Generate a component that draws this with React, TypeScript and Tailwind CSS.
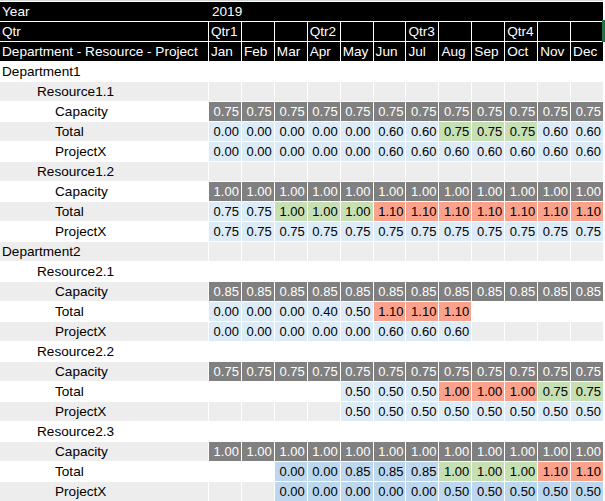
import React from "react";

type Tone = "cap" | "blue" | "blue2" | "green" | "red";
type Cell = [string, Tone] | null;

type Row = {
  label: string;
  indent: 0 | 1 | 2;
  cells?: Cell[];
};

const months = ["Jan", "Feb", "Mar", "Apr", "May", "Jun", "Jul", "Aug", "Sep", "Oct", "Nov", "Dec"];
const qtrs = ["Qtr1", "", "", "Qtr2", "", "", "Qtr3", "", "", "Qtr4", "", ""];

const toneClass: Record<Tone, string> = {
  cap: "bg-[#808080] text-white",
  blue: "bg-[#ddebf7] text-black",
  blue2: "bg-[#bdd7ee] text-black",
  green: "bg-[#c6e0b4] text-black",
  red: "bg-[#fba28d] text-black",
};

// helper: n copies of the same cell
const rep = (n: number, v: string, t: Tone): Cell[] => Array.from({ length: n }, () => [v, t] as Cell);
const empty = (n: number): Cell[] => Array.from({ length: n }, () => null);

const rows: Row[] = [
  { label: "Department1", indent: 0 },
  { label: "Resource1.1", indent: 1 },
  { label: "Capacity", indent: 2, cells: rep(12, "0.75", "cap") },
  {
    label: "Total",
    indent: 2,
    cells: [...rep(5, "0.00", "blue"), ...rep(2, "0.60", "blue"), ...rep(3, "0.75", "green"), ...rep(2, "0.60", "blue")],
  },
  { label: "ProjectX", indent: 2, cells: [...rep(5, "0.00", "blue"), ...rep(7, "0.60", "blue")] },
  { label: "Resource1.2", indent: 1 },
  { label: "Capacity", indent: 2, cells: rep(12, "1.00", "cap") },
  {
    label: "Total",
    indent: 2,
    cells: [...rep(2, "0.75", "blue"), ...rep(3, "1.00", "green"), ...rep(7, "1.10", "red")],
  },
  { label: "ProjectX", indent: 2, cells: rep(12, "0.75", "blue") },
  { label: "Department2", indent: 0 },
  { label: "Resource2.1", indent: 1 },
  { label: "Capacity", indent: 2, cells: rep(12, "0.85", "cap") },
  {
    label: "Total",
    indent: 2,
    cells: [
      ...rep(3, "0.00", "blue"),
      ["0.40", "blue"],
      ["0.50", "blue"],
      ...rep(3, "1.10", "red"),
      ...empty(4),
    ],
  },
  { label: "ProjectX", indent: 2, cells: [...rep(5, "0.00", "blue"), ...rep(3, "0.60", "blue"), ...empty(4)] },
  { label: "Resource2.2", indent: 1 },
  { label: "Capacity", indent: 2, cells: rep(12, "0.75", "cap") },
  {
    label: "Total",
    indent: 2,
    cells: [...empty(4), ...rep(3, "0.50", "blue"), ...rep(3, "1.00", "red"), ...rep(2, "0.75", "green")],
  },
  { label: "ProjectX", indent: 2, cells: [...empty(4), ...rep(8, "0.50", "blue")] },
  { label: "Resource2.3", indent: 1 },
  { label: "Capacity", indent: 2, cells: rep(12, "1.00", "cap") },
  {
    label: "Total",
    indent: 2,
    cells: [
      ...empty(2),
      ...rep(2, "0.00", "blue2"),
      ...rep(3, "0.85", "blue2"),
      ...rep(3, "1.00", "green"),
      ...rep(2, "1.10", "red"),
    ],
  },
  { label: "ProjectX", indent: 2, cells: [...empty(2), ...rep(5, "0.00", "blue2"), ...rep(5, "0.50", "blue2")] },
];

const indentClass = ["pl-[2px]", "pl-[37px]", "pl-[55px]"];

export default function App() {
  return (
    <div
      className="relative w-[605px] h-[501px] bg-white overflow-hidden text-[13.6px] leading-[18px] text-black"
      style={{ fontFamily: '"Liberation Sans", Arial, sans-serif' }}
    >
      <div className="h-px w-[603px] bg-[#d6d6d6]" />
      <div className="grid w-[603px] grid-cols-[208px_repeat(12,minmax(0,1fr))] auto-rows-[19px] gap-px pt-px">
        {/* Year */}
        <div className="col-span-13 grid grid-cols-[208px_repeat(12,minmax(0,1fr))] gap-px bg-black text-white pt-px">
          <div className="pl-[2px]">Year</div>
          <div className="pl-[3px]">2019</div>
        </div>

        {/* Qtr */}
        <div className="bg-black text-white pl-[2px] pt-px">Qtr</div>
        {qtrs.map((q, i) => (
          <div key={"q" + i} className="bg-black text-white pl-[2px] pt-px">
            {q}
          </div>
        ))}

        {/* Header */}
        <div className="bg-black text-white pl-[2px] pt-px whitespace-nowrap">Department - Resource - Project</div>
        {months.map((m) => (
          <div key={m} className="bg-black text-white pl-[2px] pt-px">
            {m}
          </div>
        ))}

        {rows.map((row, r) => {
          const band = r % 2 === 0 ? "bg-white" : "bg-[#ededed]";
          return (
            <React.Fragment key={r}>
              <div className={`${band} ${indentClass[row.indent]} pt-px whitespace-nowrap`}>{row.label}</div>
              {Array.from({ length: 12 }).map((_, c) => {
                const cell = row.cells ? row.cells[c] : null;
                if (!cell) return <div key={c} className={band} />;
                return (
                  <div key={c} className={`${toneClass[cell[1]]} text-right text-[13px] pr-[2px] pt-px`}>
                    {cell[0]}
                  </div>
                );
              })}
            </React.Fragment>
          );
        })}
      </div>

      {/* selected cell edge */}
      <div className="absolute left-[602px] top-[20px] h-[22px] w-[3px] bg-[#217346]" />
    </div>
  );
}
